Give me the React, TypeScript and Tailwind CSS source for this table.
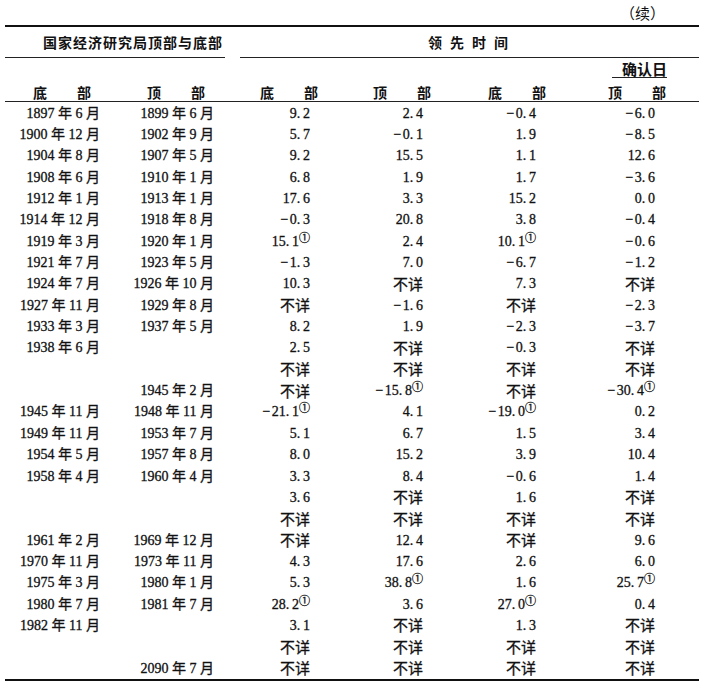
import React from 'react';

type Row = [string, string, string, string, string, string];

const N = '不详';

const rows: Row[] = [
  ['1897 年 6 月', '1899 年 6 月', '9.2', '2.4', '-0.4', '-6.0'],
  ['1900 年 12 月', '1902 年 9 月', '5.7', '-0.1', '1.9', '-8.5'],
  ['1904 年 8 月', '1907 年 5 月', '9.2', '15.5', '1.1', '12.6'],
  ['1908 年 6 月', '1910 年 1 月', '6.8', '1.9', '1.7', '-3.6'],
  ['1912 年 1 月', '1913 年 1 月', '17.6', '3.3', '15.2', '0.0'],
  ['1914 年 12 月', '1918 年 8 月', '-0.3', '20.8', '3.8', '-0.4'],
  ['1919 年 3 月', '1920 年 1 月', '15.1*', '2.4', '10.1*', '-0.6'],
  ['1921 年 7 月', '1923 年 5 月', '-1.3', '7.0', '-6.7', '-1.2'],
  ['1924 年 7 月', '1926 年 10 月', '10.3', N, '7.3', N],
  ['1927 年 11 月', '1929 年 8 月', N, '-1.6', N, '-2.3'],
  ['1933 年 3 月', '1937 年 5 月', '8.2', '1.9', '-2.3', '-3.7'],
  ['1938 年 6 月', '', '2.5', N, '-0.3', N],
  ['', '', N, N, N, N],
  ['', '1945 年 2 月', N, '-15.8*', N, '-30.4*'],
  ['1945 年 11 月', '1948 年 11 月', '-21.1*', '4.1', '-19.0*', '0.2'],
  ['1949 年 11 月', '1953 年 7 月', '5.1', '6.7', '1.5', '3.4'],
  ['1954 年 5 月', '1957 年 8 月', '8.0', '15.2', '3.9', '10.4'],
  ['1958 年 4 月', '1960 年 4 月', '3.3', '8.4', '-0.6', '1.4'],
  ['', '', '3.6', N, '1.6', N],
  ['', '', N, N, N, N],
  ['1961 年 2 月', '1969 年 12 月', N, '12.4', N, '9.6'],
  ['1970 年 11 月', '1973 年 11 月', '4.3', '17.6', '2.6', '6.0'],
  ['1975 年 3 月', '1980 年 1 月', '5.3', '38.8*', '1.6', '25.7*'],
  ['1980 年 7 月', '1981 年 7 月', '28.2*', '3.6', '27.0*', '0.4'],
  ['1982 年 11 月', '', '3.1', N, '1.3', N],
  ['', '', N, N, N, N],
  ['', '2090 年 7 月', N, N, N, N],
];

function Val({ v }: { v: string }) {
  if (!v) return null;
  if (v === N) {
    return <span className="text-[15px] font-['Noto_Sans_CJK_SC',sans-serif]">不详</span>;
  }
  const sup = v.endsWith('*');
  let s = sup ? v.slice(0, -1) : v;
  const neg = s.startsWith('-');
  if (neg) s = s.slice(1);
  const [a, b] = s.split('.');
  return (
    <span>
      {neg ? '\u2212\u200A' : ''}
      {a}.{'\u2009'}
      {b}
      {sup ? (
        <span className="relative -top-[4px] text-[11px] font-['Noto_Sans_CJK_SC',sans-serif]">①</span>
      ) : null}
    </span>
  );
}

function Head({ a, b }: { a: string; b: string }) {
  return (
    <div className="flex justify-center">
      <div className="flex w-[58px] justify-between font-['Noto_Sans_CJK_SC',sans-serif] text-[14px] font-bold leading-[16px]">
        <span>{a}</span>
        <span>{b}</span>
      </div>
    </div>
  );
}

const gridCols = 'grid grid-cols-[124px_104px_122px_104px_126px_114px]';

export default function App() {
  return (
    <div className="h-[684px] w-[707px] overflow-hidden bg-white text-[#111] font-['Liberation_Serif','Noto_Sans_CJK_SC',serif]">
      <div className="flex h-[25px] items-center justify-end pr-[42px] font-['Noto_Sans_CJK_SC',sans-serif] text-[15px] leading-none">
        （续）
      </div>
      <div className="ml-[5px] h-[2px] w-[694px] bg-[#111]" />
      <div className="ml-[5px] flex h-[31px] gap-[15px]">
        <div className="flex w-[220px] items-center border-b border-[#222] pl-[38px] font-['Noto_Sans_CJK_SC',sans-serif] text-[14px] font-bold tracking-[1px] leading-none">
          国家经济研究局顶部与底部
        </div>
        <div className="flex w-[459px] items-center border-b border-[#222] pl-[188px] font-['Noto_Sans_CJK_SC',sans-serif] text-[14px] font-bold tracking-[8px] leading-none">
          领先时间
        </div>
      </div>
      <div className={`${gridCols} h-[20px]`}>
        <div />
        <div />
        <div />
        <div />
        <div />
        <div className="ml-[32px] flex h-[20px] w-[55px] justify-end border-b border-[#222] pt-[3px] font-['Noto_Sans_CJK_SC',sans-serif] text-[15px] font-bold leading-[16px]">
          确认日
        </div>
      </div>
      <div className={`${gridCols} h-[23px] items-center pt-[4px]`}>
        <Head a="底" b="部" />
        <Head a="顶" b="部" />
        <Head a="底" b="部" />
        <Head a="顶" b="部" />
        <Head a="底" b="部" />
        <Head a="顶" b="部" />
      </div>
      <div className="ml-[5px] h-[1px] w-[694px] bg-[#222]" />
      <div className="pt-[1px]">
        {rows.map((r, i) => (
          <div
            key={i}
            className={`${gridCols} h-[21.35px] items-center text-[14px] leading-none whitespace-nowrap [-webkit-text-stroke:0.3px_#111]`}
          >
            <div className="pr-[24px] text-right">{r[0]}</div>
            <div className="pr-[14px] text-right">{r[1]}</div>
            <div className="pr-[40px] text-right">
              <Val v={r[2]} />
            </div>
            <div className="pr-[31px] text-right">
              <Val v={r[3]} />
            </div>
            <div className="pr-[44px] text-right">
              <Val v={r[4]} />
            </div>
            <div className="pr-[39px] text-right">
              <Val v={r[5]} />
            </div>
          </div>
        ))}
      </div>
      <div className="ml-[5px] h-[2px] w-[694px] bg-[#111]" />
    </div>
  );
}
